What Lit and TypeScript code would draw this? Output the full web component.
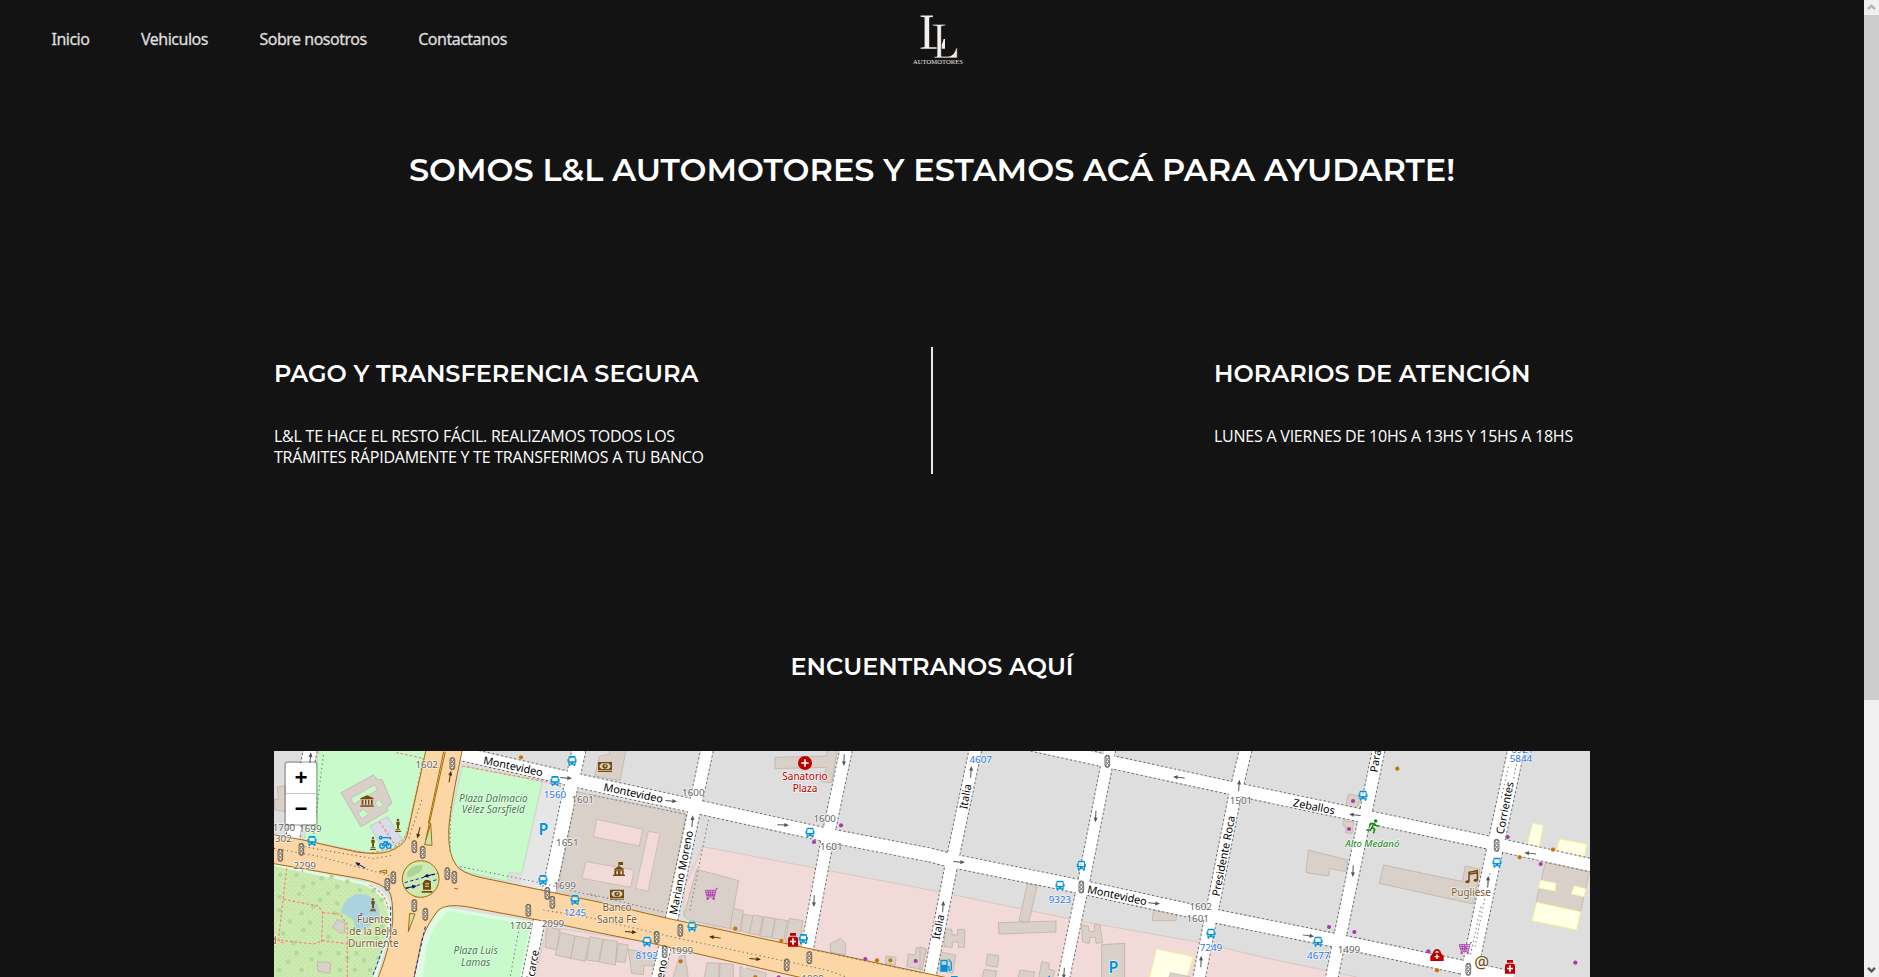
import { LitElement, html, svg, css } from "lit";
import { customElement } from "lit/decorators.js";

type Pt = [number, number];

/* The map is drawn in thirds of a pixel; each sector is 990 units wide. */
const SECTOR = 990;

const ROADS: { w: number; d: string }[] = [
  { w: 38, d: "M600,40L990,130L1310,200L1690,283L2010,345L2075,362L2460,440L2850,525L3235,603L3610,682L3760,716" },
  { w: 36, d: "M2290,8L2550,65L2930,148L3310,228L3710,313L3995,376" },
  { w: 38, d: "M151,30L95,310" },
  { w: 38, d: "M957,30L922,190L866,460" },
  { w: 32, d: "M838,540L803,715" },
  { w: 34, d: "M1341,30L1305,200L1232,550" },
  { w: 34, d: "M1217,610L1193,715" },
  { w: 34, d: "M1758,30L1705,283L1640,635" },
  { w: 34, d: "M2146,30L2078,355L2010,705" },
  { w: 32, d: "M2549,30L2470,430L2411,715" },
  { w: 34, d: "M2957,30L2925,165L2852,535L2817,715" },
  { w: 34, d: "M3356,30L3315,228L3240,590L3215,715" },
  { w: 46, d: "M3768,30L3706,320L3624,715" },
];

const BUILDINGS: string[] = [
  /* left of the avenue */
  "M52,140L76,138L76,165L98,168L98,218L44,210L44,178L55,178Z",
  /* blocks east of Balcarce */
  "M950,155L1278,222L1218,535L890,465Z",
  "M1018,50L1036,44L1048,44L1050,30L1098,30L1080,122L1004,108Z",
  "M862,560L900,570L890,630L855,622Z",
  "M902,578L945,588L932,655L886,645Z",
  "M945,588L990,596L975,664L932,655Z",
  "M990,590L1030,598L1015,665L980,660Z",
  "M1030,598L1072,604L1066,675L1018,666Z",
  "M1075,610L1105,615L1095,668L1068,664Z",
  "M1105,628L1195,645L1185,680L1152,675L1150,704L1115,700Z",
  "M1310,388L1436,422L1410,566L1285,540L1272,525Z",
  "M1420,505L1450,512L1440,575L1410,566Z",
  "M1450,522L1480,528L1468,580L1442,572Z",
  "M1480,525L1508,530L1498,586L1468,580Z",
  "M1512,530L1546,536L1534,593L1500,588Z",
  "M1546,536L1582,542L1572,600L1536,594Z",
  "M1588,535L1628,542L1620,618L1575,606Z",
  "M1545,52L1700,48L1700,30L1732,30L1715,128L1684,125L1700,82L1545,86Z",
  "M1710,612L1742,595L1758,612L1756,645L1712,636Z",
  "M1878,648L1908,652L1906,675L1876,671Z",
  "M1945,642L1965,645L1970,622L2000,628L1985,688L1940,680Z",
  "M1258,650L1275,645L1285,715L1238,715Z",
  "M1342,668L1378,670L1376,715L1332,715Z",
  "M1380,670L1420,673L1420,715L1378,715Z",
  "M1440,680L1520,700L1515,715L1440,712Z",
  /* around Italia */
  "M2302,432L2332,436L2306,548L2277,542Z",
  "M2215,548L2388,543L2388,576L2217,582Z",
  "M2055,568L2075,568L2077,585L2093,585L2093,568L2114,568L2114,622L2095,622L2095,606L2077,606L2077,622L2052,620Z",
  "M2040,636L2087,645L2078,700L2030,690Z",
  "M2182,642L2217,648L2212,682L2178,676Z",
  "M2172,688L2210,693L2206,715L2166,715Z",
  "M2280,690L2325,696L2320,715L2274,715Z",
  "M2345,665L2368,670L2366,688L2384,692L2378,715L2336,715Z",
  "M2465,556L2485,558L2488,575L2502,575L2504,552L2520,556L2528,608L2508,610L2506,592L2490,592L2488,610L2468,606Z",
  "M2525,614L2594,610L2594,715L2525,715Z",
  "M2680,510L2750,520L2748,542L2677,542Z",
  "M1980,620L1998,628L1986,690L1980,690Z",
  /* eastern blocks */
  "M3265,162L3298,168L3296,195L3282,206L3256,202Z",
  "M3250,242L3280,246L3276,280L3256,278L3258,260L3250,257Z",
  "M3145,330L3263,360L3258,395L3210,386L3206,408L3138,398Z",
  "M3371,375L3608,425L3615,378L3660,388L3640,492L3358,430Z",
  "M3856,368L3988,395L3962,515L3828,487Z",
];

const INNER: string[] = [
  "M1010,238L1148,268L1138,318L1000,290Z",
  "M1165,274L1200,280L1164,453L1127,446Z",
  "M978,365L1122,390L1112,442L966,415Z",
];

const YELLOW: string[] = [
  "M2690,627L2800,650L2780,715L2668,715Z",
  "M3818,250L3850,256L3838,320L3802,312Z",
  "M3898,297L3980,312L3974,350L3890,334Z",
  "M3840,420L3888,430L3886,453L3836,444Z",
  "M3942,438L3978,446L3972,470L3934,462Z",
  "M3830,487L3962,515L3950,570L3816,542Z",
];

interface Label { s: number; x: number; y: number; t: string; c: string; r?: number }
const LABELS: Label[] = [
  { s: 0, x: 500, y: 83, t: "1602", c: "num" },
  { s: 0, x: 757, y: 90, t: "Montevideo", c: "road", r: 12 },
  { s: 0, x: 700, y: 185, t: "Plaza Dalmacio", c: "park" },
  { s: 0, x: 700, y: 220, t: "Vélez Sarsfield", c: "park" },
  { s: 0, x: 885, y: 173, t: "1560", c: "stop" },
  { s: 0, x: 968, y: 188, t: "1601", c: "num" },
  { s: 0, x: 922, y: 318, t: "1651", c: "num" },
  { s: 0, x: 914, y: 448, t: "1699", c: "num" },
  { s: 0, x: 945, y: 528, t: "1245", c: "stop" },
  { s: 0, x: 879, y: 562, t: "2099", c: "num" },
  { s: 0, x: 783, y: 568, t: "1702", c: "num" },
  { s: 0, x: 72, y: 272, t: "1700", c: "num" },
  { s: 0, x: 151, y: 276, t: "1699", c: "num" },
  { s: 0, x: 70, y: 307, t: "302", c: "num" },
  { s: 0, x: 134, y: 387, t: "2299", c: "num" },
  { s: 0, x: 340, y: 550, t: "Fuente", c: "place" },
  { s: 0, x: 340, y: 586, t: "de la Bella", c: "place" },
  { s: 0, x: 340, y: 621, t: "Durmiente", c: "place" },
  { s: 0, x: 41, y: 612, t: "d", c: "place" },
  { s: 0, x: 647, y: 643, t: "Plaza Luis", c: "park" },
  { s: 0, x: 647, y: 678, t: "Lamas", c: "park" },
  { s: 0, x: 826, y: 695, t: "Balcarce", c: "road", r: -80 },
  { s: 1, x: 128, y: 170, t: "Montevideo", c: "road", r: 12 },
  { s: 1, x: 310, y: 169, t: "1600", c: "num" },
  { s: 1, x: 285, y: 400, t: "Mariano Moreno", c: "road", r: -79 },
  { s: 1, x: 220, y: 720, t: "Moreno", c: "road", r: -79 },
  { s: 1, x: 645, y: 120, t: "Sanatorio", c: "health" },
  { s: 1, x: 645, y: 156, t: "Plaza", c: "health" },
  { s: 1, x: 704, y: 247, t: "1600", c: "num" },
  { s: 1, x: 724, y: 330, t: "1601", c: "num" },
  { s: 1, x: 81, y: 513, t: "Banco", c: "place" },
  { s: 1, x: 81, y: 549, t: "Santa Fe", c: "place" },
  { s: 1, x: 170, y: 657, t: "8192", c: "stop" },
  { s: 1, x: 276, y: 643, t: "1999", c: "num" },
  { s: 1, x: 668, y: 727, t: "1899", c: "num" },
  { s: 2, x: 182, y: 69, t: "4607", c: "stop" },
  { s: 2, x: 148, y: 172, t: "Italia", c: "road", r: -79 },
  { s: 2, x: 66, y: 563, t: "Italia", c: "road", r: -79 },
  { s: 2, x: 420, y: 489, t: "9323", c: "stop" },
  { s: 2, x: 589, y: 477, t: "Montevideo", c: "road", r: 12 },
  { s: 2, x: 963, y: 193, t: "1501", c: "num" },
  { s: 2, x: 922, y: 350, t: "Presidente Roca", c: "road", r: -79 },
  { s: 2, x: 842, y: 510, t: "1602", c: "num" },
  { s: 2, x: 833, y: 545, t: "1601", c: "num" },
  { s: 2, x: 873, y: 633, t: "7249", c: "stop" },
  { s: 3, x: 394, y: 27, t: "Paraguay", c: "road", r: -81 },
  { s: 3, x: 190, y: 211, t: "Zeballos", c: "road", r: 11 },
  { s: 3, x: 367, y: 320, t: "Alto Medanó", c: "leisure" },
  { s: 3, x: 817, y: 40, t: "6921", c: "stop" },
  { s: 3, x: 813, y: 66, t: "5844", c: "stop" },
  { s: 3, x: 776, y: 206, t: "Corrientes", c: "road", r: -79 },
  { s: 3, x: 663, y: 469, t: "Pugliese", c: "place" },
  { s: 3, x: 205, y: 657, t: "4677", c: "stop" },
  { s: 3, x: 297, y: 640, t: "1499", c: "num" },
];

const at = (s: number, pts: Pt[]): Pt[] => pts.map(([x, y]) => [s * SECTOR + x, y]);

const BUSES: Pt[] = [
  ...at(0, [[936, 63], [885, 123], [156, 303], [849, 420], [945, 480]]),
  ...at(1, [[660, 278], [306, 560], [171, 605], [640, 597]]),
  ...at(2, [[484, 377], [420, 437], [873, 581]]),
  ...at(3, [[339, 167], [741, 368], [204, 605]]),
];
const LIGHTS: Pt[] = [
  ...at(0, [[577, 71], [463, 320], [488, 337], [124, 328], [61, 346], [400, 413], [382, 433], [562, 401], [583, 412], [463, 497], [496, 523], [805, 511], [862, 460], [877, 487]]),
  ...at(1, [[271, 571], [200, 592], [224, 635], [658, 653], [590, 675]]),
  ...at(2, [[562, 64], [484, 441]]),
  ...at(3, [[740, 316], [655, 688]]),
];
/* x, y, heading in degrees, colour */
const ARROWS: [number, number, number, string][] = [
  [151, 55, -84, "#555"], [570, 110, -80, "#4a3000"], [476, 278, 104, "#4a3000"], [301, 376, -150, "#101070"],
  [918, 114, 5, "#555"], [1233, 183, 5, "#555"], [1569, 255, 3, "#555"], [1297, 244, -86, "#555"],
  [1752, 60, 92, "#555"], [1662, 483, 92, "#555"], [1112, 576, 4, "#4a3000"], [1365, 592, 188, "#4a3000"],
  [1485, 657, 5, "#4a3000"], [2133, 96, -86, "#555"], [2097, 366, 5, "#555"], [2049, 500, -86, "#555"],
  [2507, 229, 93, "#555"], [2757, 112, 186, "#555"], [2682, 490, 5, "#555"], [2937, 137, -86, "#555"],
  [2823, 665, -88, "#555"], [2412, 700, 94, "#555"], [3285, 225, 186, "#555"], [3279, 393, 92, "#555"],
  [3684, 425, -88, "#555"], [3811, 340, 186, "#555"], [3145, 587, 8, "#555"],
];
const SHOPS: [number, number, string][] = [
  [783, 52, "#c77400"], [1743, 256, "#ac39ac"], [1662, 306, "#ac39ac"], [1426, 566, "#c77400"], [1564, 603, "#c77400"],
  [1816, 657, "#ac39ac"], [1851, 661, "#c77400"], [1891, 661, "#c77400"], [1967, 663, "#ac39ac"], [1262, 664, "#c77400"],
  [1486, 711, "#c77400"], [1556, 712, "#ac39ac"], [3412, 86, "#c77400"], [3279, 183, "#ac39ac"], [3267, 267, "#ac39ac"],
  [3743, 291, "#ac39ac"], [3779, 352, "#c77400"], [3879, 329, "#c77400"], [3842, 372, "#ac39ac"], [3207, 561, "#ac39ac"],
  [3283, 576, "#ac39ac"], [3505, 634, "#ac39ac"], [3531, 691, "#c77400"], [3946, 668, "#ac39ac"],
];
const TREES: Pt[] = [
  [60, 405], [58, 470], [57, 510], [110, 405], [130, 440], [118, 462], [160, 430], [185, 415], [215, 410], [232, 440], [262, 425],
  [205, 460], [180, 480], [232, 490], [160, 500], [125, 520], [90, 545], [70, 580], [130, 570], [150, 548], [205, 590], [180, 640],
  [155, 658], [110, 640], [85, 665], [58, 690], [125, 690], [235, 640], [262, 655], [290, 640], [312, 662], [330, 690], [240, 690],
  [285, 690], [350, 595], [366, 560], [300, 450], [340, 452], [365, 480], [225, 520], [100, 610], [355, 655],
];

const bus = ([x, y]: Pt) => svg`<g transform="translate(${x} ${y})">
  <path class="halo" d="M-13,-15H13V16H-13Z"/>
  <path fill="#0092da" fill-rule="evenodd" d="M-8,-15H8L11,-12V11H10V15H5V11H-5V15H-10V11H-11V-12ZM-8,-10V1H8V-10ZM-8,5V8H-4V5ZM4,5V8H8V5Z"/>
  <path fill="#0092da" d="M-13.5,-6H-10V4H-13.5ZM10,-6H13.5V4H10Z"/></g>`;

const light = ([x, y]: Pt) => svg`<g transform="translate(${x} ${y})" fill="none" stroke="#3c3c3c" stroke-width="2.2">
  <rect x="-7" y="-18" width="14" height="36" rx="6" fill="#fff" fill-opacity=".3"/>
  <circle cy="-11.5" r="4.5" fill="#fff" fill-opacity=".4"/><circle r="4.5" fill="#fff" fill-opacity=".4"/><circle cy="11.5" r="4.5" fill="#fff" fill-opacity=".4"/></g>`;

const arrow = ([x, y, r, c]: [number, number, number, string]) => svg`<g transform="translate(${x} ${y}) rotate(${r})">
  <path d="M-17,0H6" stroke=${c} stroke-width="3"/><path d="M4,-6L18,0L4,6Z" fill=${c}/></g>`;

const bank = (x: number, y: number) => svg`<g transform="translate(${x} ${y})" fill="#734a08">
  <path fill-rule="evenodd" d="M-21,-14H21V11H-21ZM-16,-5Q-12,-6 -11,-10H11Q12,-6 16,-5V3Q12,4 11,7H-11Q-12,4 -16,3Z"/>
  <ellipse rx="8" ry="7" cy="-1"/><circle cx="1" cy="-2" r="3" fill="#d9d0c9"/><path d="M-21,13H21V16H-21Z"/></g>`;

const cart = (x: number, y: number) => svg`<g transform="translate(${x} ${y})" fill="none" stroke="#ac39ac" stroke-width="2.6">
  <path d="M20,-17H15L9,9H-14M-18,-11H13M-17,-5H12M-15,1H11M-18,-11L-14,5H10M-10,-11L-8,5M-3,-11V5M5,-11L3,5"/>
  <circle cx="-11" cy="14" r="2.5" fill="#ac39ac"/><circle cx="7" cy="14" r="2.5" fill="#ac39ac"/></g>`;

const pharmacy = (x: number, y: number) => svg`<g transform="translate(${x} ${y})" fill="#bf0000">
  <path d="M-9,-21H9V-13H-9ZM-10,-10H10Q15,-8 15,-4V20H-15V-4Q-15,-8 -10,-10Z"/>
  <path fill="#fff" d="M-2.5,-5H2.5V2H9V7H2.5V14H-2.5V7H-9V2H-2.5Z"/></g>`;

const statue = (x: number, y: number) => svg`<g transform="translate(${x} ${y})" fill="#734a08">
  <circle cy="-17" r="3.5"/><path d="M-5,-12H5V-2H3V9H-3V-2H-5ZM-7,11H7V14H-7ZM-9,16H9V19H-9Z"/></g>`;

@customElement("city-map")
export class CityMap extends LitElement {
  static styles = css`
    :host { display: block; position: relative; height: 226px; overflow: hidden; background: #dedede; }
    svg { display: block; width: 1316px; height: 226px; }
    text { font-family: "Noto Sans", sans-serif; font-size: 30px; text-anchor: middle; paint-order: stroke; stroke: #fff; stroke-opacity: .65; stroke-width: 5px; stroke-linejoin: round; }
    .num { fill: #666; font-size: 29.5px; }
    .stop { fill: #2a78f0; font-size: 29.5px; }
    .road { fill: #000; font-size: 32.5px; stroke-opacity: 1; }
    .park { fill: #3b7f44; font-style: italic; }
    .leisure { fill: #118811; font-style: italic; font-size: 29px; }
    .place { fill: #80592a; }
    .health { fill: #bf0000; }
    .parking { fill: #0092da; font-weight: 600; font-size: 48px; }
    .at { fill: #734a08; font-size: 50px; }
    .halo { fill: #fff; fill-opacity: .5; }
    .building path { fill: #d9d0c9; stroke: #c3b3a6; stroke-width: 2.5; }
    .inner path { fill: #f2dad9; stroke: #cbb8ad; stroke-width: 2.5; }
    .yellow path { fill: #ffffe5; stroke: #f4f19c; stroke-width: 3; }
    .walk { fill: none; stroke: #fa8072; stroke-width: 3.5; stroke-dasharray: 8 6; }
    .side { fill: none; stroke: #777; stroke-width: 3.2; stroke-dasharray: 4 9; }
    .zoom { position: absolute; left: 10px; top: 10px; width: 30px; border: 2px solid rgba(0, 0, 0, .2); border-radius: 4px; background-clip: padding-box; }
    .zoom span { display: block; height: 30px; background: #fff; color: #000; text-align: center; font: bold 22px/34px "Liberation Mono", monospace; }
    .zoom span:first-child { border-bottom: 1px solid #ccc; border-radius: 2px 2px 0 0; }
    .zoom span:last-child { border-radius: 0 0 2px 2px; }
  `;

  render() {
    return html`
      <svg viewBox="42 33 3948 678">
        <defs>
          <pattern id="grass" width="14" height="14" patternUnits="userSpaceOnUse">
            <rect width="14" height="14" fill="#cdebb0"/><circle cx="4" cy="4" r="1.3" fill="#8cbf78"/><circle cx="11" cy="11" r="1.3" fill="#8cbf78"/>
          </pattern>
        </defs>
        <rect x="42" y="33" width="3948" height="678" fill="#dedede"/>
        <g fill="#f2dad9" stroke="#d6bdb0" stroke-width="2">
          <path d="M1328,320L1670,385L2010,450L2470,545L2840,611L3010,652L3290,711V730H1900L1270,530L1274,440Z"/>
          <path d="M862,560L1250,620L1700,730H820Z"/>
        </g>
        <path fill="#e6e6e6" d="M852,120L925,120L866,462L780,438Z"/>
        <g class="building">${BUILDINGS.map((d) => svg`<path d=${d}/>`)}</g>
        <g class="inner">${INNER.map((d) => svg`<path d=${d}/>`)}</g>
        <g class="yellow">${YELLOW.map((d) => svg`<path d=${d}/>`)}</g>
        <path fill="#d9d0c9" stroke="#c3b3a6" stroke-width="2" d="M2725,715L2732,698L2790,710V715Z"/>

        <g stroke="#b9dcb9" stroke-width="2">
          <path fill="#c8facc" d="M178,30H500L440,275Q425,322 385,336L330,340L132,300Z"/>
          <path fill="#c8facc" d="M607,78L846,124L785,400L746,397L742,424L620,396Q575,370 568,330V260Z"/>
        </g>
        <path fill="#dffce2" d="M548,500L835,548L800,715H462L480,610Q505,545 548,500Z"/>
        <path fill="#c8facc" d="M565,512L810,556L778,715H488L500,620Q520,550 565,512Z"/>
        <path fill="#dffce2" d="M42,370L330,430Q398,460 400,540L350,715H42Z"/>
        <path fill="url(#grass)" d="M42,378L300,432Q375,455 385,530Q380,600 338,715H42Z"/>
        <g fill="#aedca0">${TREES.map(([x, y]) => svg`<circle cx=${x} cy=${y} r="7"/>`)}</g>
        <path fill="#aad3df" d="M243,518Q250,470 300,462Q345,462 358,510Q362,535 345,545Q320,570 285,572Q285,545 275,535Q260,525 243,518Z"/>
        <circle cx="304" cy="524" r="4" fill="#3737c8"/>
        <path class="walk" d="M80,385L55,600L160,612L190,602L262,612V711M70,478L175,498L188,518L185,605M188,518L240,522L262,555V612M125,388L130,400M42,610L55,600L70,610"/>
        <path class="walk" d="M128,306L330,340L400,325Q440,300 450,245L490,55L410,38M607,78L850,124L905,140M330,436Q380,460 384,510"/>
        <g class="building">
          <path d="M243,158L340,105L353,120L366,118L396,190L380,202L384,212L303,260Z"/>
          <path d="M172,665L212,668L210,700L174,694Z"/><path d="M217,562L232,538L254,548L254,578L240,580L232,572Z"/>
        </g>
        <g fill="#c8facc" stroke="#c3b3a6" stroke-width="2">
          <path d="M272,175L345,134L352,150L280,193Z"/><path d="M345,188L358,178L370,194L356,204Z"/><path d="M294,220L310,208L326,222L306,236Z"/>
        </g>
        <path fill="#d9dbe8" stroke="#b8bcc8" stroke-width="2" d="M330,258L382,230L428,300L370,332Z"/>
        <path class="walk" d="M358,245L410,322"/>

        <g fill="none" stroke-linejoin="round">
          ${ROADS.map((r) => svg`<path d=${r.d} stroke="#c4c4c4" stroke-width=${r.w + 3}/>`)}
          ${ROADS.map((r) => svg`<path d=${r.d} stroke="#5e5e5e" stroke-width=${r.w + 7} stroke-dasharray="5.5 8"/>`)}
          ${ROADS.map((r) => svg`<path d=${r.d} stroke="#fff" stroke-width=${r.w + 1}/>`)}
        </g>
        <path class="side" d="M190,45L160,290M780,550L750,715M1345,240L1288,520M990,165L1275,222M990,462L1210,516M3745,80L3722,180M3772,60L3760,120M3690,400L3645,620M3663,500L3630,650"/>

        <path fill="#fcd6a4" stroke="#a26c0c" stroke-width="3" d="M30,282L125,299L290,336Q350,345 385,335Q430,320 441,288Q465,180 499,25H608Q572,190 566,270Q564,345 590,378Q605,398 660,412L1020,487L1218,534L1630,622L2055,712V730H1700L1580,703L1180,611L1010,577L850,543L620,500Q560,490 535,510Q500,555 485,600L460,725H350Q392,620 398,545Q400,475 388,455Q370,430 300,416L30,369Z"/>
        <path fill="none" stroke="#a26c0c" stroke-width="3" d="M556,35L497,300M551,35L505,250"/>
        <g fill="#c8e6a8" stroke="#a26c0c" stroke-width="3">
          <path d="M512,250L516,316L494,314Z"/><path d="M449,520L465,522L445,575Z"/><path d="M358,394L380,390V400Z"/>
          <path d="M583,445L594,447"/>
          <circle cx="482" cy="417" r="55" fill="#cdeaaf"/>
        </g>
        <path fill="#acd496" d="M442,400Q450,375 487,375Q490,395 465,405Q455,412 442,412Z"/>
        <g class="side">
          <path d="M42,325L180,350L400,410M120,318L340,356L400,345M600,380L850,430L1010,470M850,510L1000,535L1210,585L1700,690L1760,711M1660,630L1990,700M572,200L570,340M485,180L445,300"/>
        </g>
        <path fill="none" stroke="#1c1cd8" stroke-width="3" stroke-dasharray="10 7" d="M434,428L534,400M438,446L534,418M392,500V560L345,690L336,711M496,560L462,711"/>
        ${arrow([508, 406, 166, "#101070"])}${arrow([453, 441, -10, "#101070"])}

        ${ARROWS.map(arrow)}
        ${LIGHTS.map(light)}
        ${BUSES.map(bus)}
        ${SHOPS.map(([x, y, c]) => svg`<circle cx=${x} cy=${y} r="6.3" fill=${c}/>`)}
        ${statue(414, 257)}${statue(339, 311)}${statue(339, 495)}
        ${bank(1035, 80)}${bank(1071, 463)}
        ${cart(1354, 462)}${cart(3616, 625)}
        ${pharmacy(1599, 600)}${pharmacy(3750, 681)}

        <g transform="translate(321 184)" fill="#734a08"><path d="M-20,-9L0,-18L20,-9V-6H-20ZM-16,-4H-11V10H-16ZM-6,-4H-2V10H-6ZM3,-4H7V10H3ZM12,-4H17V10H12ZM-20,12H20V16H-20Z"/></g>
        <g transform="translate(501 440)" fill="#734a08"><path fill-rule="evenodd" d="M-6,-20H6L12,-12V9H-12V-12ZM-6,-10V-7H6V-10ZM-6,-3V0H6V-3ZM-16,13H16V18H-16Z"/></g>
        <g transform="translate(375 306)" fill="none" stroke="#0092da" stroke-width="4">
          <circle cx="-9" cy="12" r="7"/><circle cx="11" cy="12" r="7"/><path d="M-9,12L-2,2H8L11,12M0,12L8,2L5,-3M-4,-1H2M-12,-13H16V-8"/><circle cx="-13" cy="-13" r="4"/>
        </g>
        <g transform="translate(1077 388)" fill="#734a08"><path fill-rule="evenodd" d="M-15,-1L0,-10L15,-1V1H-15ZM-14,3H14V16H18V20H-18V16H-14ZM-8,6V15H-3V6ZM4,6V15H9V6Z"/><path d="M-2,-22H12V-13H1V-8H-2Z"/></g>
        <g transform="translate(1635 69)"><circle r="21" fill="#bf0000"/><path fill="#fff" d="M-2.5,-11H2.5V-2.5H11V2.5H2.5V11H-2.5V2.5H-11V-2.5H-2.5Z"/></g>
        <g transform="translate(3531 646)"><path fill="#bf0000" fill-rule="evenodd" d="M-20,17V3L-12,-7Q-10,-18 0,-19Q10,-18 12,-7L20,3V17ZM-6,-8H6Q5,-14 0,-14Q-5,-14 -6,-8Z"/><path fill="#fff" d="M-2,-3H2V2H7V6H2V11H-2V6H-7V2H-2Z"/></g>
        <g transform="translate(2057 678)" fill="#0092da"><path fill-rule="evenodd" d="M-16,-16Q-16,-19 -13,-19H3Q6,-19 6,-16V17H-16ZM-12,-14V-4H2V-14Z"/><path fill="none" stroke="#0092da" stroke-width="3.5" d="M6,2H10V12Q15,16 17,10V-10L9,-20"/></g>
        <path fill="#0092da" d="M2073,708H2093V715H2073ZM2362,712L2370,706V715Z"/>
        <g transform="translate(3637 411)" fill="none" stroke="#734a08" stroke-width="4.5"><path d="M-10,14V-14L15,-19V9M-10,-8L15,-13"/><ellipse cx="-15" cy="14" rx="6" ry="4.5" fill="#734a08" stroke="none"/><ellipse cx="10" cy="10" rx="6" ry="4.5" fill="#734a08" stroke="none"/></g>
        <g transform="translate(3339 259)" fill="none" stroke="#118811" stroke-width="4.5" stroke-linecap="round"><circle cx="8" cy="-16" r="3" fill="#118811"/><path d="M-10,-3L-6,-9L4,-8L10,-2H16M3,-8L-3,3L5,9L2,19M-3,4L-8,11L-19,11"/></g>
        <path d="M1453,675V686" stroke="#eee" stroke-width="6"/>

        ${LABELS.map((l) => svg`<text class=${l.c} transform="translate(${l.s * SECTOR + l.x} ${l.y}) rotate(${l.r ?? 0})">${l.t}</text>`)}
        <text class="parking" x="850" y="284">P</text>
        <text class="parking" x="2560" y="698">P</text>
        <text class="at" x="3665" y="683">@</text>
      </svg>
      <div class="zoom"><span>+</span><span>−</span></div>
    `;
  }
}

@customElement("app-root")
export class AppRoot extends LitElement {
  static styles = css`
    :host { display: flex; height: 977px; overflow: hidden; background: #131313; color: #fff; font-family: "Open Sans", "Segoe UI", sans-serif; }
    .page { width: 1864px; }
    header { display: grid; grid-template-columns: 860px 156px 1fr; height: 80px; }
    nav { display: flex; gap: 51.6px; padding: 27px 0 0 51.5px; font: 400 16px/24px "Noto Sans", sans-serif; letter-spacing: -.5px; color: #dedede; -webkit-text-stroke: .3px #dedede; white-space: nowrap; }
    .logo { display: block; width: 60px; height: 60px; margin: 10px auto 0; }
    .logo text { font: 6.6px "Liberation Serif", serif; fill: #eee9e4; }
    h1, h2, p { margin: 0; white-space: nowrap; }
    h1, h2 { font-family: Montserrat, Inter, sans-serif; font-weight: 600; }
    h1 { padding-top: 70px; text-align: center; font-size: 32px; line-height: 40px; }
    h2 { font-size: 24px; line-height: 30px; }
    .info { display: grid; grid-template-columns: 657px 2px 657px; width: 1316px; height: 127px; margin: 157px auto 0; }
    .rule { background: #e8e8e8; }
    .info article { padding-top: 12px; }
    .info article:last-child { padding-left: 281px; }
    .info p { padding-top: 37px; font-size: 16px; line-height: 21px; letter-spacing: -.23px; }
    .find { padding-top: 178px; text-align: center; }
    .find city-map { width: 1316px; margin: 69px auto 0; text-align: left; }
    .scroll { display: flex; flex-direction: column; width: 15px; background: #f0f0f0; }
    .scroll svg { display: block; width: 15px; height: 15px; fill: none; stroke-width: 2.4; }
    .thumb { height: 685px; background: #cdcdcd; }
    .down { margin-top: auto; }
  `;

  render() {
    return html`
      <div class="page">
        <header>
          <nav><span>Inicio</span><span>Vehiculos</span><span>Sobre nosotros</span><span>Contactanos</span></nav>
          <svg class="logo" viewBox="908 10 60 60">
            <g fill="#f4efea">
              <path d="M920.5,15.5H933V16.7L929.2,17.4V47.3H937Q942,47 943.6,39H945V48.8H920.5V47.7L924.6,47V17.3L920.5,16.7Z"/>
              <path stroke="#131313" stroke-width=".7" d="M932.5,24.3H945.4V25.7L941.4,26.3V56.2H948.5Q954,56 956,48H957.3V58H934V56.8L937,56.2V26.3L932.5,25.7Z"/>
            </g>
            <text x="913" y="64.4" textLength="50">AUTOMOTORES</text>
          </svg>
        </header>
        <main>
          <h1>SOMOS L&amp;L AUTOMOTORES Y ESTAMOS ACÁ PARA AYUDARTE!</h1>
          <section class="info">
            <article>
              <h2>PAGO Y TRANSFERENCIA SEGURA</h2>
              <p>L&amp;L TE HACE EL RESTO FÁCIL. REALIZAMOS TODOS LOS<br>TRÁMITES RÁPIDAMENTE Y TE TRANSFERIMOS A TU BANCO</p>
            </article>
            <div class="rule"></div>
            <article>
              <h2>HORARIOS DE ATENCIÓN</h2>
              <p>LUNES A VIERNES DE 10HS A 13HS Y 15HS A 18HS</p>
            </article>
          </section>
          <section class="find">
            <h2>ENCUENTRANOS AQUÍ</h2>
            <city-map></city-map>
          </section>
        </main>
      </div>
      <div class="scroll">
        <svg viewBox="0 0 15 15" stroke="#b5b5b5"><path d="M4 9.2L7.5 5.7L11 9.2"/></svg>
        <div class="thumb"></div>
        <svg class="down" viewBox="0 0 15 15" stroke="#555"><path d="M4 5.8L7.5 9.3L11 5.8"/></svg>
      </div>
    `;
  }
}
